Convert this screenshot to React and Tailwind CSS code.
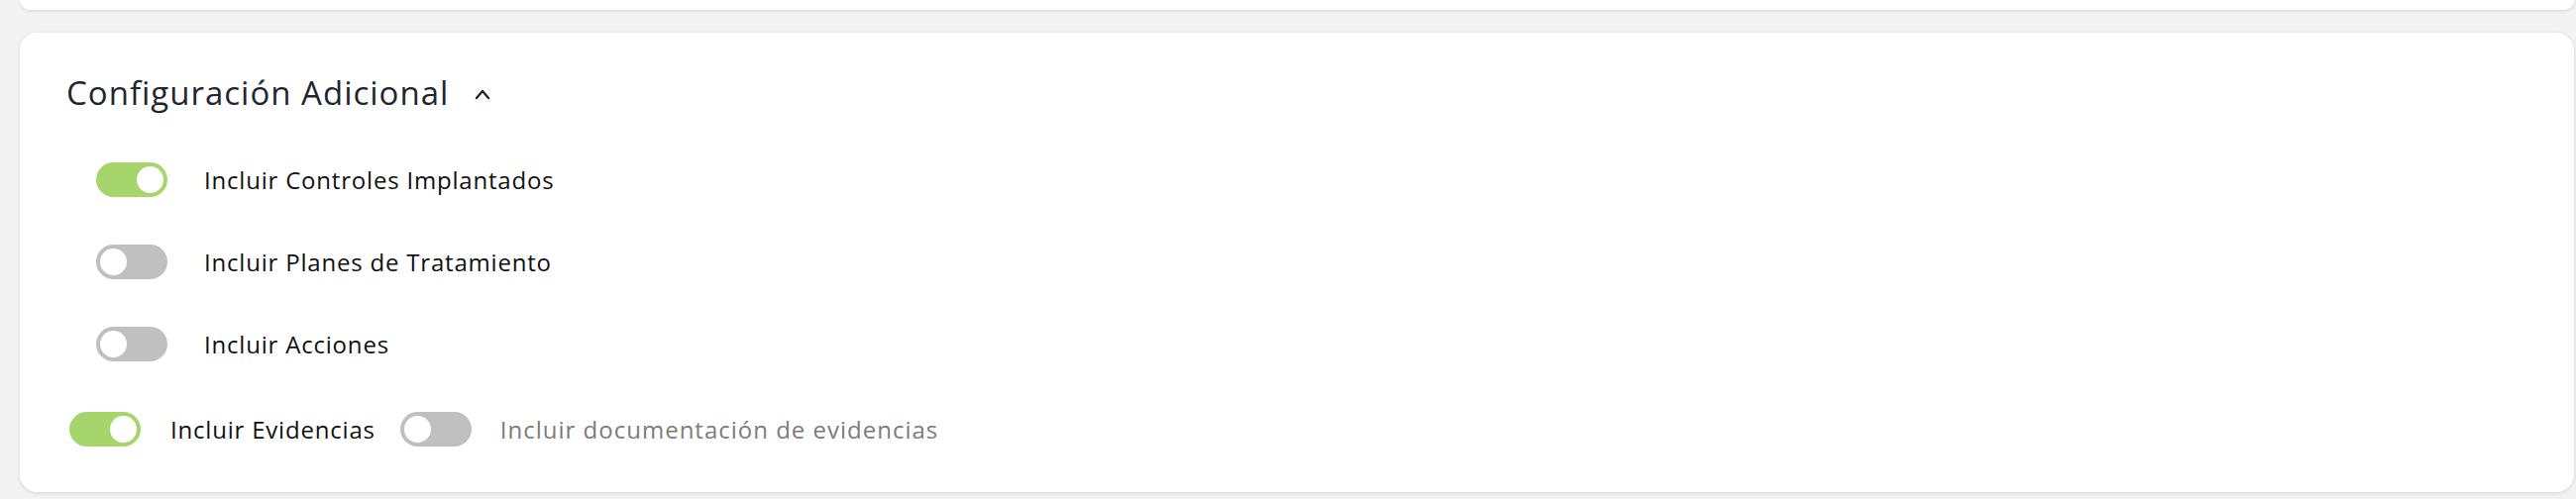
import { useState } from 'react'

const FONT = { fontFamily: '"Open Sans", "Noto Sans", sans-serif' }

const OPTIONS = [
  { id: 'controles', label: 'Incluir Controles Implantados', on: true },
  { id: 'planes', label: 'Incluir Planes de Tratamiento', on: false },
  { id: 'acciones', label: 'Incluir Acciones', on: false },
]

function Toggle({ checked, onChange }) {
  return (
    <button
      type="button"
      onClick={() => onChange(!checked)}
      className={`flex h-[35px] w-[72px] shrink-0 items-center rounded-full px-[4px] transition-colors ${
        checked ? 'justify-end bg-[#a6d66b]' : 'justify-start bg-[#c0c0c0]'
      }`}
    >
      <span className="block h-[27px] w-[27px] rounded-full bg-white" />
    </button>
  )
}

function ChevronUp() {
  return (
    <svg width="16" height="12" viewBox="0 0 16 12" fill="none">
      <polyline points="2,10 8,3 14,10" stroke="#1f2633" strokeWidth="2.4" strokeLinecap="round" strokeLinejoin="round" />
    </svg>
  )
}

export default function App() {
  const [values, setValues] = useState({
    controles: true,
    planes: false,
    acciones: false,
    evidencias: true,
    documentacion: false,
  })
  const set = (id) => (v) => setValues(prev => ({ ...prev, [id]: v }))

  return (
    <div className="min-h-screen bg-[#f3f3f3] pl-[20px] pr-[2px]" style={FONT}>
      {/* previous card, only its bottom edge is visible */}
      <div className="h-[10px] rounded-b-[18px] bg-white shadow-[0_1px_4px_rgba(0,0,0,0.12)]" />

      {/* Configuración adicional */}
      <section className="mt-[23px] h-[464px] rounded-[18px] bg-white pl-[47px] pt-[37px] shadow-[0_1px_5px_rgba(0,0,0,0.12)]">
        <div className="flex h-[48px] items-center">
          <h2 className="text-[33px] leading-[48px] font-normal tracking-[1px] text-[#1f2633]">Configuración Adicional</h2>
          <span className="ml-[26px] mt-[2px]">
            <ChevronUp />
          </span>
        </div>

        <div className="mt-[46px] flex flex-col gap-[48px] pl-[30px]">
          {OPTIONS.map(o => (
            <div key={o.id} className="flex h-[35px] items-center gap-[37px]">
              <Toggle checked={values[o.id]} onChange={set(o.id)} />
              <span className="text-[24px] tracking-[0.8px] text-[#111111]">{o.label}</span>
            </div>
          ))}
        </div>

        <div className="mt-[51px] flex h-[35px] items-center pl-[3px]">
          <Toggle checked={values.evidencias} onChange={set('evidencias')} />
          <span className="ml-[30px] text-[24px] tracking-[0.8px] text-[#111111]">Incluir Evidencias</span>
          <span className="ml-[25px]">
            <Toggle checked={values.documentacion} onChange={set('documentacion')} />
          </span>
          <span className="ml-[29px] text-[24px] tracking-[1px] text-[#7c7c7c]">Incluir documentación de evidencias</span>
        </div>
      </section>
    </div>
  )
}
